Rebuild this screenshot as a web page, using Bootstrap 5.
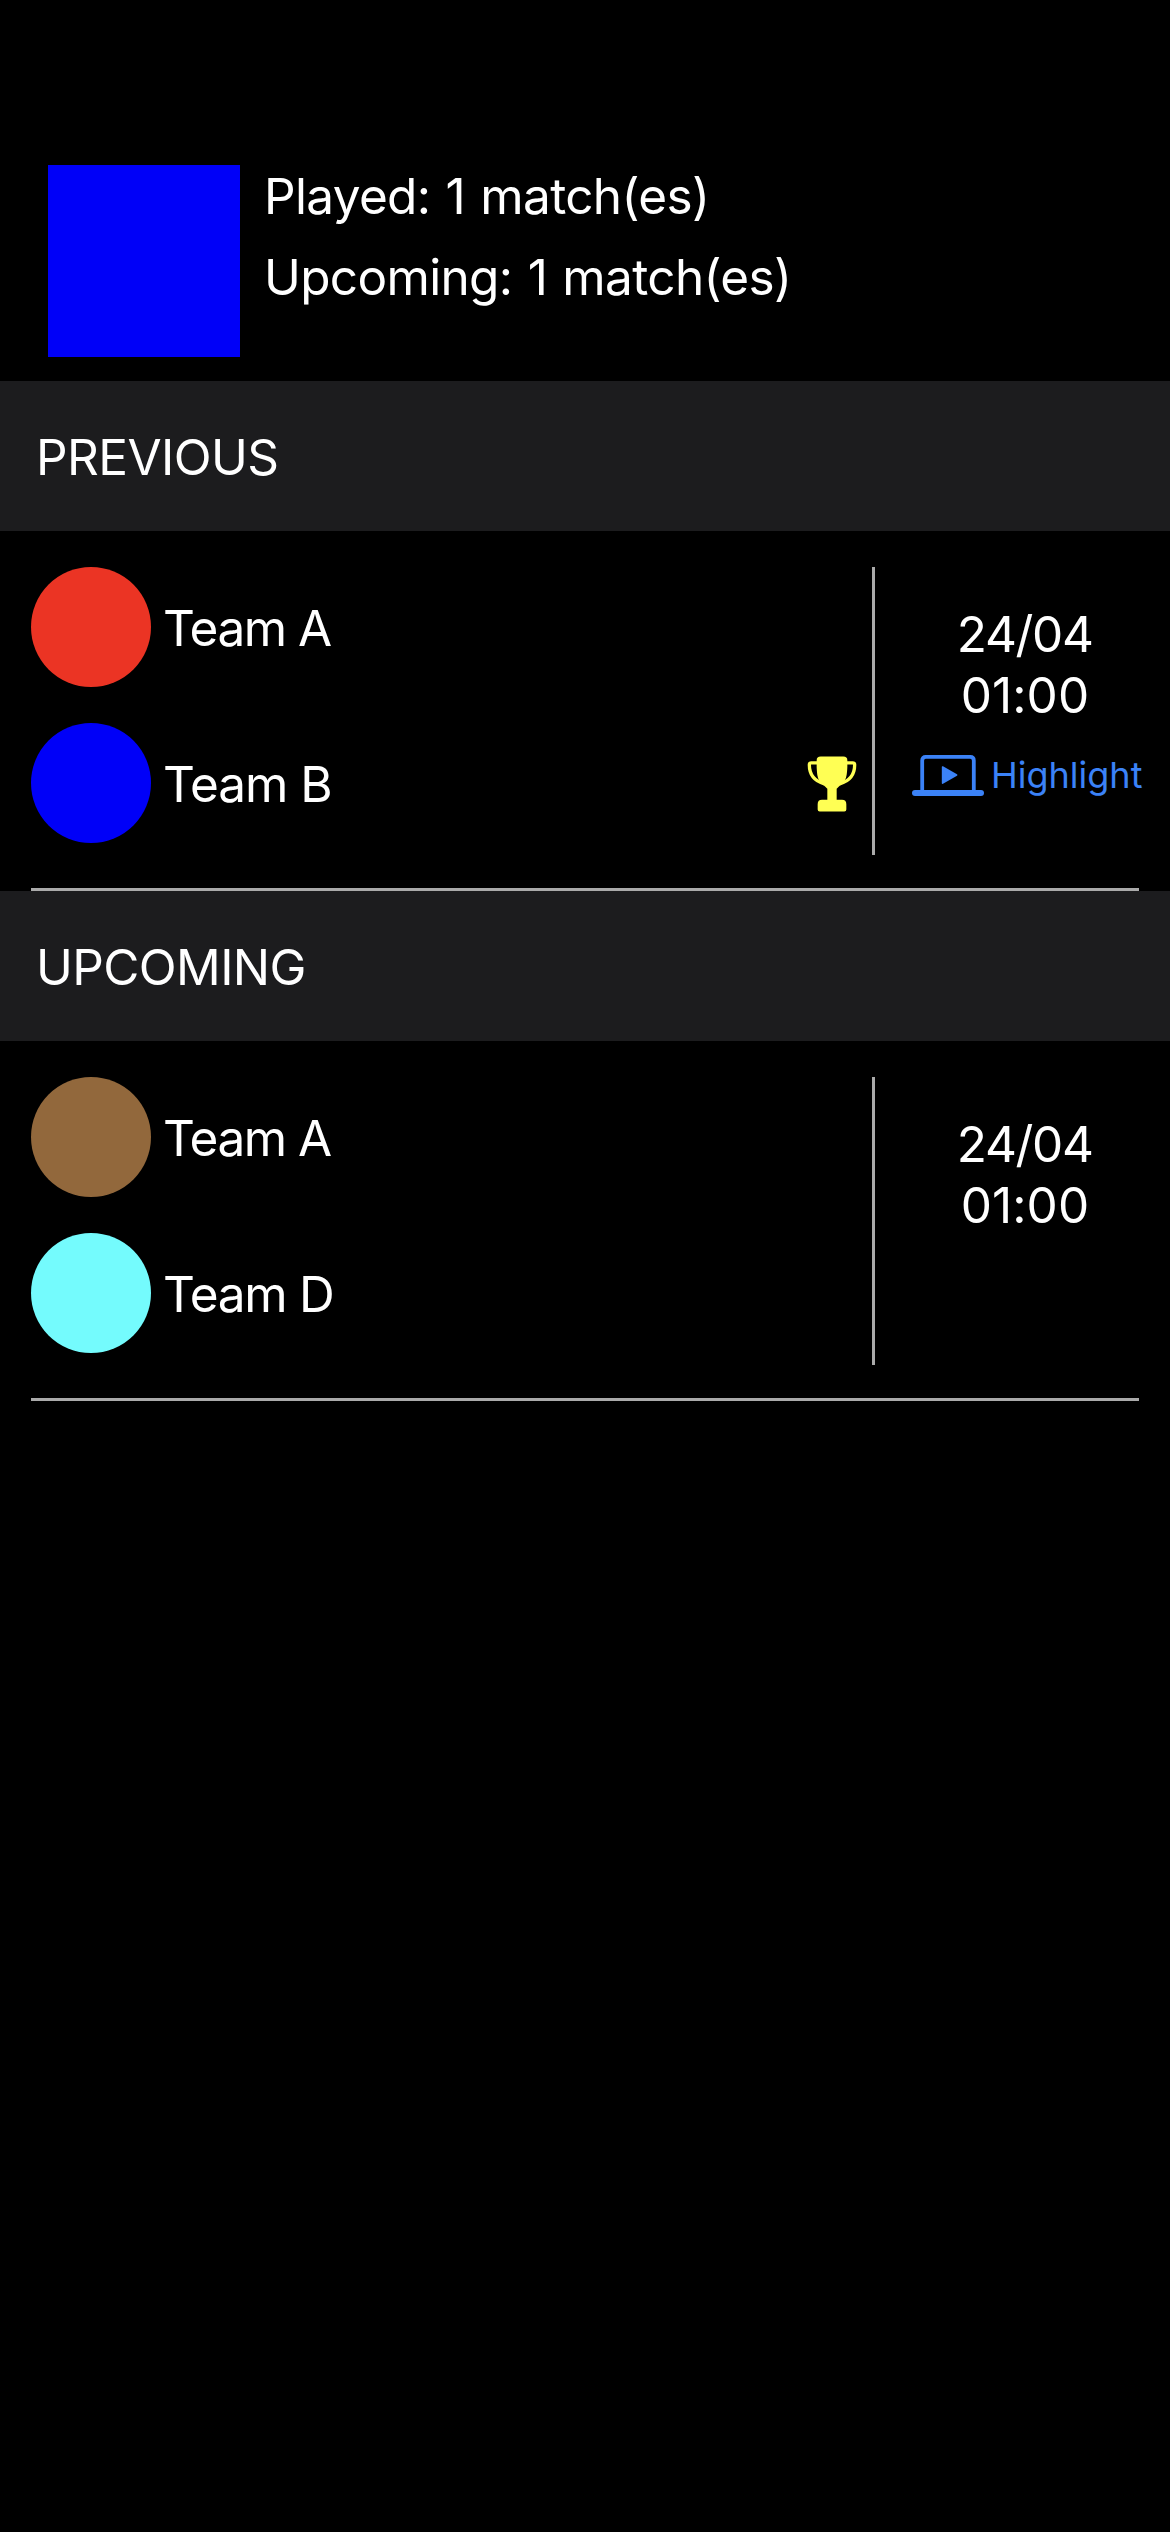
<!DOCTYPE html>
<html lang="en">
<head>
<meta charset="utf-8">
<meta name="viewport" content="width=device-width, initial-scale=1">
<title>Team matches</title>
<link rel="stylesheet" href="https://cdn.jsdelivr.net/npm/bootstrap@5.3.0/dist/css/bootstrap.min.css">
<style>
  body { background: #000; color: #fff; font: 400 49.5px/61px Inter, "Liberation Sans", sans-serif; min-height: 100vh; }
  .summary { padding: 165px 48px 24px; gap: 24px; }
  .summary-logo { width: 192px; height: 192px; background: #0000f8; }
  .summary-text { gap: 20px; padding-top: .6px; letter-spacing: -.66px; word-spacing: 2px; }
  .section-title { height: 150px; padding: 2px 36px 0; margin: 0; background: #1c1c1e; font: inherit; letter-spacing: -.6px; }
  .match { height: 360px; padding: 36px 31px 0; }
  .match-body { height: 288px; }
  .match-rule { height: 3px; margin-top: 33px; background: #aaa; }
  .teams { gap: 36px; padding-right: 15px; }
  .team { height: 120px; gap: 12px; }
  .team-dot { width: 120px; height: 120px; }
  .team-name { letter-spacing: -1.3px; padding-top: 2px; }
  .name-a { letter-spacing: -1.5px; }
  .name-b { letter-spacing: -1.05px; }
  .trophy { margin-top: 1.5px; }
  .red { background: #eb3424; }
  .blue { background: #0000f8; }
  .brown { background: #92683c; }
  .cyan { background: #74fbfd; }
  .when { width: 267px; border-left: 3px solid #aaa; padding: 36.5px 0 0 37px; }
  .day { letter-spacing: -1.3px; margin-right: 1.5px; }
  .hour { letter-spacing: .1px; margin-right: 1px; }
  .highlight-link { color: #3b82f7; font-size: 36px; line-height: 44px; gap: 7px; margin-top: 27.5px; letter-spacing: 0; }
  .highlight-link:hover { color: #3b82f7; }
</style>
</head>
<body>
<header class="summary d-flex">
  <div class="summary-logo flex-shrink-0"></div>
  <div class="summary-text d-flex flex-column">
    <div>Played: 1 match(es)</div>
    <div>Upcoming: 1 match(es)</div>
  </div>
</header>
<main>
  <section>
    <h2 class="section-title d-flex align-items-center">PREVIOUS</h2>
    <article class="match">
      <div class="match-body d-flex">
        <div class="teams d-flex flex-column flex-grow-1">
          <div class="team d-flex align-items-center">
            <span class="team-dot rounded-circle red"></span>
            <span class="team-name name-a">Team A</span>
          </div>
          <div class="team d-flex align-items-center">
            <span class="team-dot rounded-circle blue"></span>
            <span class="team-name name-b">Team B</span>
            <svg class="trophy ms-auto" width="50" height="56" viewBox="79 76.5 150 168" aria-label="Winner">
              <g fill="none" stroke="#ffff54" stroke-width="10">
                <path d="M112 97H92Q86 97 86 103C86 134 101 152 131 160"/>
                <path d="M196 97H216Q222 97 222 103C222 134 207 152 177 160"/>
              </g>
              <path fill="#ffff54" d="M108 89Q108 78 120 78H188Q200 78 200 89V110C199 129 198 139 193 149C187 158 177 165 168 175V208H184Q197 208 197 221V237Q197 243 191 243H117Q111 243 111 237V221Q111 208 124 208H140V175C131 165 121 158 115 149C110 139 109 129 108 110Z"/>
            </svg>
          </div>
        </div>
        <div class="when flex-shrink-0 text-center">
          <div class="day">24/04</div>
          <div class="hour">01:00</div>
          <a href="#" class="highlight-link d-flex align-items-center text-decoration-none">
            <svg class="flex-shrink-0" width="72" height="42" viewBox="0 0 72 42" fill="#3b82f7" aria-hidden="true">
              <path d="M10.2 37V6.5Q10.2 2.9 13.8 2.9H58.2Q61.8 2.9 61.8 6.5V37" fill="none" stroke="#3b82f7" stroke-width="3.8"/>
              <rect y="36" width="72" height="6" rx="3"/>
              <path d="M31 12.3L45 20.2Q46 21 45 21.8L31 29.8Q29.8 30.3 29.8 29V13Q29.8 11.8 31 12.3Z"/>
            </svg>
            <span>Highlight</span>
          </a>
        </div>
      </div>
      <div class="match-rule"></div>
    </article>
  </section>
  <section>
    <h2 class="section-title d-flex align-items-center">UPCOMING</h2>
    <article class="match">
      <div class="match-body d-flex">
        <div class="teams d-flex flex-column flex-grow-1">
          <div class="team d-flex align-items-center">
            <span class="team-dot rounded-circle brown"></span>
            <span class="team-name name-a">Team A</span>
          </div>
          <div class="team d-flex align-items-center">
            <span class="team-dot rounded-circle cyan"></span>
            <span class="team-name">Team D</span>
          </div>
        </div>
        <div class="when flex-shrink-0 text-center">
          <div class="day">24/04</div>
          <div class="hour">01:00</div>
        </div>
      </div>
      <div class="match-rule"></div>
    </article>
  </section>
</main>
<script src="https://cdn.jsdelivr.net/npm/bootstrap@5.3.0/dist/js/bootstrap.bundle.min.js"></script>
</body>
</html>
